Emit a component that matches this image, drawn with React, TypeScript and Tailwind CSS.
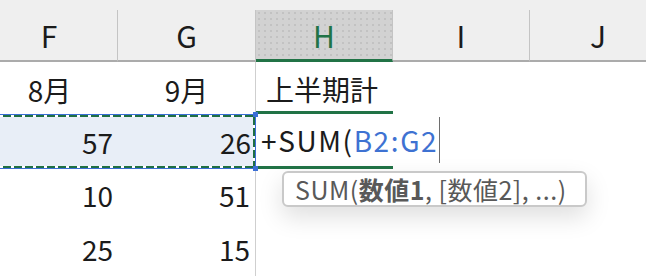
const cols = "grid grid-cols-[137px_138px_137px_137px_137px] -ml-[19px]";
const ants = "bg-[repeating-linear-gradient(90deg,#1f6f43_0_8px,#ffffff_8px_11px)]";
const antsV = "bg-[repeating-linear-gradient(180deg,#1f6f43_0_8px,#ffffff_8px_11px)]";

function HeaderCell({ label, active }: { label: string; active?: boolean }) {
  return (
    <div
      className={
        active
          ? "flex items-center justify-center border-r border-r-[#c4c4c4] border-b-[3px] border-b-[#217346] bg-[#d2d2d2] bg-[radial-gradient(#c2c2c2_1px,transparent_1px)] bg-[length:6px_6px] text-[#217346]"
          : "flex items-center justify-center border-r border-r-[#c4c4c4] border-b-2 border-b-[#ababab]"
      }
    >
      {label}
    </div>
  );
}

function Num({ v, line }: { v: number; line?: boolean }) {
  return (
    <div
      className={
        line
          ? "flex items-center justify-end border-r border-[#cfcfcf] pr-[5px]"
          : "flex items-center justify-end pr-[5px]"
      }
    >
      {v}
    </div>
  );
}

export default function App() {
  return (
    <div className="relative h-[276px] w-[646px] overflow-hidden bg-white font-['Noto_Sans_CJK_JP','Noto_Sans',sans-serif] text-[#1b1b1b]">
      {/* column headers */}
      <div className="bg-[#efefef] pt-[10px]">
        <div className={`${cols} h-[52px] text-[30px] leading-none`}>
          <HeaderCell label="F" />
          <HeaderCell label="G" />
          <HeaderCell label="H" active />
          <HeaderCell label="I" />
          <HeaderCell label="J" />
        </div>
      </div>

      {/* sheet body */}
      <div className={`${cols} text-[28px] leading-none`}>
        {/* row 1 */}
        <div className="flex h-[52px] items-center justify-center pt-[4px]">8月</div>
        <div className="flex items-center justify-center border-r border-[#cfcfcf] pt-[4px]">9月</div>
        <div className="flex items-center border-b-[3px] border-[#217346] pl-[10px] pt-[5px]">上半期計</div>
        <div />
        <div />

        {/* row 2 : referenced range + cell in edit */}
        <div className="relative col-span-2 flex h-[55px] flex-col border-y border-r border-[#3b6fd6] bg-[#e8eef7]">
          <div className={`h-[2px] ${ants}`} />
          <div className="flex flex-1">
            <div className="grid flex-1 grid-cols-[137px_1fr]">
              <div className="flex items-center justify-end pr-[5px]">57</div>
              <div className="flex items-center justify-end pr-[2px]">26</div>
            </div>
            <div className={`w-[2px] ${antsV}`} />
          </div>
          <div className={`h-[2px] ${ants}`} />
          <div className="absolute -right-[3px] -top-[3px] h-[5px] w-[5px] bg-[#3b6fd6]" />
          <div className="absolute -bottom-[3px] -right-[3px] h-[5px] w-[5px] bg-[#3b6fd6]" />
        </div>
        <div className="flex items-center overflow-visible whitespace-nowrap border-b-[3px] border-[#217346] pl-[5px] tracking-[1.6px]">
          <span className="shrink-0">+SUM(</span>
          <span className="shrink-0 text-[#3e72d2]">B2:G2</span>
          <span className="ml-[1px] inline-block h-[46px] w-px shrink-0 bg-[#6e6e6e]" />
        </div>
        <div />
        <div />

        {/* row 3 */}
        <div className="h-[52px] grid">
          <Num v={10} />
        </div>
        <Num v={51} line />
        <div />
        <div />
        <div />

        {/* row 4 */}
        <div className="h-[55px] grid">
          <Num v={25} />
        </div>
        <Num v={15} line />
        <div />
        <div />
        <div />
      </div>

      {/* function tooltip */}
      <div className="absolute left-[282px] top-[171px] flex h-[36px] w-[305px] items-center whitespace-nowrap rounded-[6px] border-2 border-[#c9c9c9] bg-white pl-[11px] text-[25px] leading-none tracking-[0.5px] text-[#595959] shadow-[0_10px_24px_rgba(0,0,0,0.13)]">
        SUM(<b className="font-bold">数値1</b>, [数値2], ...)
      </div>
    </div>
  );
}
